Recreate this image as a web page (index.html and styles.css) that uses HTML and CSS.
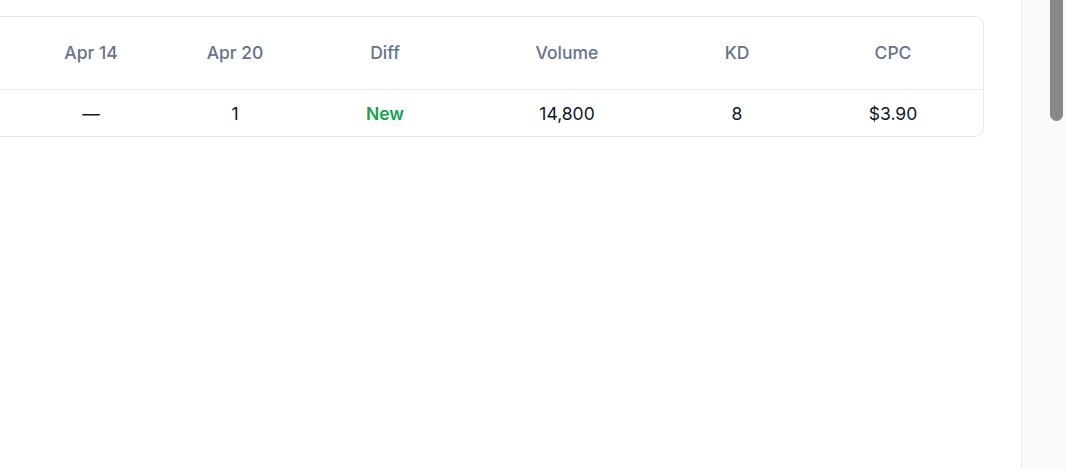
FILE: index.html
```html
<!DOCTYPE html>
<html lang="en">
<head>
    <meta charset="UTF-8">
    <meta name="viewport" content="width=device-width, initial-scale=1.0">
    <title>Keyword rankings</title>
    <link rel="stylesheet" href="styles.css">
</head>
<body>
    <div class="page">
        <main class="content">
            <!-- 排名表格（左侧被横向滚动裁掉） -->
            <div class="table-card">
                <div class="row header-row">
                    <div class="cell spacer"></div>
                    <div class="cell">Apr 14</div>
                    <div class="cell">Apr 20</div>
                    <div class="cell">Diff</div>
                    <div class="cell">Volume</div>
                    <div class="cell">KD</div>
                    <div class="cell">CPC</div>
                </div>
                <div class="row body-row">
                    <div class="cell spacer"></div>
                    <div class="cell">—</div>
                    <div class="cell">1</div>
                    <div class="cell diff-new">New</div>
                    <div class="cell">14,800</div>
                    <div class="cell">8</div>
                    <div class="cell">$3.90</div>
                </div>
            </div>
        </main>

        <!-- 右侧面板 + 滚动条 -->
        <aside class="side-panel">
            <div class="scroll-thumb"></div>
        </aside>
    </div>
</body>
</html>
```

FILE: styles.css
```css
/* 全局样式 */
body {
    font-family: 'Inter', 'Noto Sans', sans-serif;
    background-color: #ffffff;
    color: #0f172a;
    margin: 0;
    padding: 0;
}

.page {
    display: flex;
    height: 469px;
    overflow: hidden;
}

.content {
    flex: 1;
    padding: 16px 37px 0 0;
    background: #ffffff;
}

/* 表格卡片 */
.table-card {
    border: 1px solid #e2e8f0;
    border-left: none;
    border-radius: 0 9px 9px 0;
    background: #ffffff;
}

.row {
    display: grid;
    grid-template-columns: 19px 144px 144px 156px 208px 132px 1fr;
    align-items: center;
}

.cell {
    text-align: center;
    font-size: 17.5px;
    white-space: nowrap;
}

.header-row {
    height: 73px;
    padding-bottom: 1px;
    box-sizing: border-box;
    border-bottom: 1px solid #e2e8f0;
}

.header-row .cell {
    color: #64748b;
    font-weight: 500;
}

.body-row {
    height: 46px;
}

.body-row .cell {
    color: #0f172a;
}

.body-row .cell.diff-new {
    color: #16a34a;
    font-weight: 600;
}

/* 右侧面板 */
.side-panel {
    width: 45px;
    border-left: 1px solid #e5e9f2;
    background: #f9fafb;
    display: flex;
    justify-content: flex-end;
    padding-right: 3px;
    box-sizing: border-box;
}

.scroll-thumb {
    width: 13px;
    height: 121px;
    background: #888888;
    border-radius: 0 0 7px 7px;
}
```
